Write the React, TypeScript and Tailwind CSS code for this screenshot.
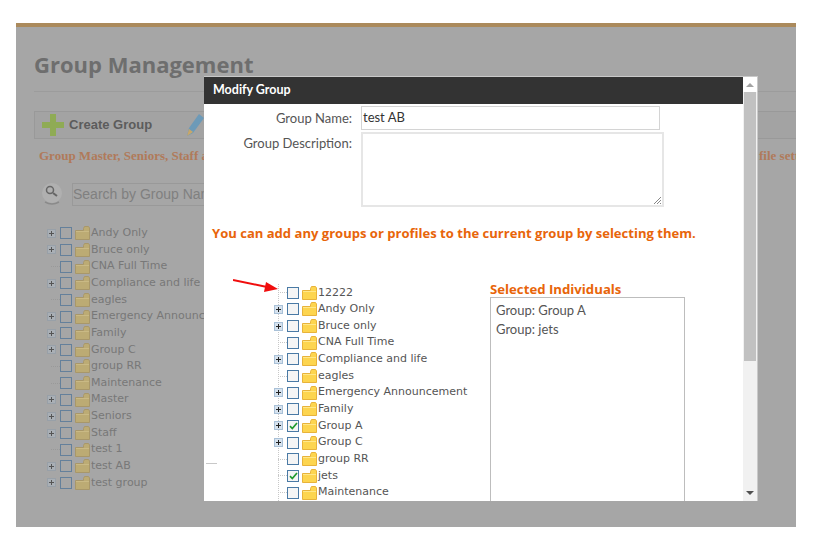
import React from "react";

const sans = "font-['Open_Sans','Noto_Sans',sans-serif]";
const lato = "font-['Lato','Noto_Sans',sans-serif]";

function Folder({ dim }: { dim?: boolean }) {
  const fill = dim ? "#bcab74" : "#fdd54f";
  const edge = dim ? "#a8976a" : "#e8b33a";
  return (
    <svg width="15" height="14" viewBox="0 0 15 14" className="shrink-0">
      <path d="M0.5 4.5H8.5V2.5L9.5 0.5H13.5L14.5 2V13.5H0.5Z" fill={fill} stroke={edge} />
      <path d="M1 5.5H14" stroke={dim ? "#c9b985" : "#ffe88a"} />
    </svg>
  );
}

function Expander({ dim }: { dim?: boolean }) {
  return (
    <svg width="9" height="9" viewBox="0 0 9 9" className="shrink-0">
      <rect x="0.5" y="0.5" width="8" height="8" fill={dim ? "#a9afb5" : "#d6e2ee"} stroke={dim ? "#98a0a8" : "#a9c1d8"} />
      <path d="M2 4.5H7M4.5 2V7" stroke={dim ? "#555555" : "#222222"} />
    </svg>
  );
}

function Check({ dim, on }: { dim?: boolean; on?: boolean }) {
  return (
    <span
      className={`flex h-[12px] w-[12px] shrink-0 items-center justify-center border ${
        dim ? "border-[#64809b] bg-[#a6a6a6]" : "border-[#4a7aa5] bg-[#f5f5f5]"
      }`}
    >
      {on && (
        <svg width="9" height="8" viewBox="0 0 9 8">
          <path d="M1 4.2L3.3 6.5L8 1" fill="none" stroke="#1f9a2e" strokeWidth="1.7" />
        </svg>
      )}
    </span>
  );
}

function Row({ label, exp, dim, on }: { label: string; exp?: boolean; dim?: boolean; on?: boolean }) {
  return (
    <div className="flex h-[16.65px] items-center">
      <span className="flex w-[13px] shrink-0 items-center">
        {exp ? (
          <Expander dim={dim} />
        ) : (
          <span className={`ml-[4px] w-[9px] border-t border-dotted ${dim ? "border-[#999999]" : "border-[#c8c8c8]"}`} />
        )}
      </span>
      <Check dim={dim} on={on} />
      <span className="ml-[3px] flex">
        <Folder dim={dim} />
      </span>
      <span
        className={`ml-[1px] whitespace-nowrap font-['DejaVu_Sans',sans-serif] text-[11px] ${
          dim ? "text-[#787878]" : "text-[#555555]"
        }`}
      >
        {label}
      </span>
    </div>
  );
}

const leftRows: [string, boolean][] = [
  ["Andy Only", true],
  ["Bruce only", true],
  ["CNA Full Time", false],
  ["Compliance and life", true],
  ["eagles", false],
  ["Emergency Announcement", true],
  ["Family", true],
  ["Group C", true],
  ["group RR", false],
  ["Maintenance", false],
  ["Master", true],
  ["Seniors", true],
  ["Staff", true],
  ["test 1", false],
  ["test AB", true],
  ["test group", true],
];

const modalRows: [string, boolean, boolean][] = [
  ["12222", false, false],
  ["Andy Only", true, false],
  ["Bruce only", true, false],
  ["CNA Full Time", false, false],
  ["Compliance and life", true, false],
  ["eagles", false, false],
  ["Emergency Announcement", true, false],
  ["Family", true, false],
  ["Group A", true, true],
  ["Group C", true, false],
  ["group RR", false, false],
  ["jets", false, true],
  ["Maintenance", false, false],
];

export default function App() {
  return (
    <div className="h-[544px] w-[823px] overflow-hidden bg-white pl-[16px] pt-[23px]">
      <div className="relative h-[504px] w-[780px] overflow-hidden border-t-4 border-[#ab8a5c] bg-[#a6a6a6]">
        {/* dimmed page */}
        <div className="pl-[18px] pt-[22px]">
          <h1 className={`${sans} text-[22px] font-bold leading-[30px] text-[#6e6e6e]`}>Group Management</h1>
          <div className="mt-[12px] h-px bg-[#9c9c9c]" />
          <div className="mt-[19px] flex h-[28px] items-center border-y border-l border-[#999999] bg-[#a3a3a3] pl-[7px]">
            <svg width="22" height="22" viewBox="0 0 22 22" className="shrink-0">
              <path d="M8 0H14V8H22V14H14V22H8V14H0V8H8Z" fill="#8fab55" />
            </svg>
            <span className="ml-[5px] font-['Liberation_Sans',sans-serif] text-[13px] font-bold text-[#5c5c5c]">Create Group</span>
            <svg width="18" height="26" viewBox="0 0 18 26" className="ml-[34px] shrink-0">
              <path d="M1 24L3 16L13 2L18 6L7 21Z" fill="#6d9ab8" />
              <path d="M1 24L3 17L7 20Z" fill="#c8a76a" />
            </svg>
          </div>
          <div className="relative mt-[9px] h-[16px] whitespace-nowrap font-['Liberation_Serif',serif] text-[13px] font-bold leading-[16px] text-[#b07a5a]">
            <span className="ml-[5px]">Group Master, Seniors, Staff and</span>
            <span className="absolute left-[725px] top-0">file settings</span>
          </div>
          <div className="ml-[8px] mt-[18px] flex items-center">
            <svg width="20" height="24" viewBox="0 0 20 24" className="shrink-0">
              <circle cx="10" cy="11" r="10" fill="#b0b0b0" />
              <path d="M3 20Q10 24 17 20" stroke="#8a8a8a" strokeWidth="1.5" fill="none" />
              <circle cx="8" cy="8" r="3.5" fill="none" stroke="#666666" strokeWidth="1.5" />
              <path d="M11 11L15 14" stroke="#666666" strokeWidth="2" />
            </svg>
            <div className="ml-[10px] flex h-[23px] w-[200px] items-center overflow-hidden border border-[#999999] font-['Liberation_Sans',sans-serif] text-[14px] whitespace-nowrap text-[#808080]">
              Search by Group Name
            </div>
          </div>
          <div className="ml-[13px] mt-[19px]">
            {leftRows.map(([l, e]) => (
              <Row key={l} label={l} exp={e} dim />
            ))}
          </div>
        </div>

        {/* modal */}
        <div className="absolute left-[188px] top-[49px] flex h-[425px] w-[554px] overflow-hidden border-t border-[#c9c9c9] bg-white">
          <div className="relative min-w-0 flex-1">
            <div className={`${lato} flex h-[27px] items-center bg-[#333333] pl-[9px] text-[12.5px] font-bold text-white`}>Modify Group</div>
            <div className={`${lato} mt-[2px] flex text-[13px] text-[#555555]`}>
              <span className="w-[148px] pt-[1px] text-right leading-[22px]">Group Name:</span>
              <div className="ml-[9px] flex h-[24px] w-[299px] items-center border border-[#d4d4d4] pl-[1px] text-[#333333]">test AB</div>
            </div>
            <div className={`${lato} mt-[2px] flex text-[13px] text-[#555555]`}>
              <span className="w-[148px] pt-[1px] text-right leading-[20px]">Group Description:</span>
              <div className="relative ml-[9px] h-[75px] w-[303px] border-2 border-[#e6e6e6]">
                <svg width="9" height="9" viewBox="0 0 9 9" className="absolute bottom-0 right-0">
                  <path d="M1 8L8 1M4 8L8 4M7 8L8 7" stroke="#888888" />
                </svg>
              </div>
            </div>
            <p className={`${sans} ml-[8px] mt-[17px] whitespace-nowrap text-[13.05px] font-bold leading-[18px] text-[#e8650a]`}>
              You can add any groups or profiles to the current group by selecting them.
            </p>
            <div className="mt-[42px] flex">
              <div className="relative ml-[74px] w-[212px] border-l border-dotted border-[#c8c8c8]">
                <div className="-ml-[5px] mt-[0.5px]">
                  {modalRows.map(([l, e, on]) => (
                    <Row key={l} label={l} exp={e} on={on} />
                  ))}
                </div>
              </div>
              <div className="-mt-[2px]">
                <div className={`${sans} text-[13.2px] font-bold leading-[15px] text-[#e8650a]`}>Selected Individuals</div>
                <div className={`${lato} h-[260px] w-[195px] border border-[#bdbdbd] pl-[5px] pt-[3px] text-[13px] leading-[19px] text-[#555555]`}>
                  <div>Group: Group A</div>
                  <div>Group: jets</div>
                </div>
              </div>
            </div>
            <span className="absolute left-[2px] top-[386px] h-px w-[11px] bg-[#c8c8c8]" />
            <svg width="46" height="13" viewBox="0 0 46 13" className="absolute left-[29px] top-[202px]">
              <path d="M0 1L34 8" stroke="#f00d0d" strokeWidth="2" />
              <path d="M45 10L33 3L31 13Z" fill="#f00d0d" />
            </svg>
          </div>
          <div className="flex w-[15px] shrink-0 flex-col border-r border-[#c9c9c9] bg-[#f1f1f1]">
            <div className="flex h-[15px] items-center justify-center bg-white">
              <span className="h-0 w-0 border-x-[4px] border-b-[4px] border-x-transparent border-b-[#a3a3a3]" />
            </div>
            <div className="mx-[1px] h-[269px] bg-[#c1c1c1]" />
            <div className="flex-1" />
            <div className="flex h-[17px] items-center justify-center">
              <span className="h-0 w-0 border-x-[4px] border-t-[4px] border-x-transparent border-t-[#505050]" />
            </div>
          </div>
        </div>
      </div>
    </div>
  );
}
